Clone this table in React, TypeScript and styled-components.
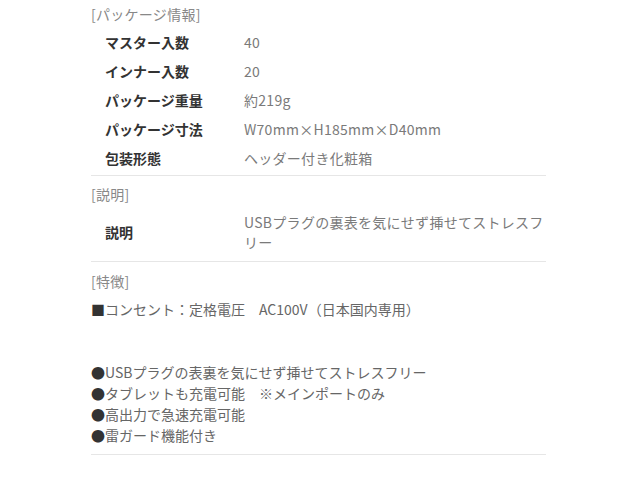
import React from 'react';
import styled, { createGlobalStyle } from 'styled-components';

const GlobalStyle = createGlobalStyle`
  html, body {
    margin: 0;
    padding: 0;
    background: #fff;
  }
  body {
    font-family: 'Noto Sans CJK JP', 'Noto Sans', sans-serif;
    font-size: 14px;
    color: #666;
  }
`;

const Wrapper = styled.div`
  width: 455px;
  margin-left: 91px;
`;

const Section = styled.section<{ $padBottom: number }>`
  padding-bottom: ${(p) => p.$padBottom}px;
  border-bottom: 1px solid #e6e6e6;
`;

const SectionTitle = styled.div<{ $padTop: number }>`
  padding: ${(p) => p.$padTop}px 0 3px;
  line-height: 20px;
  color: #888;
  letter-spacing: 0.02em;
`;

const Row = styled.div<{ $tall?: boolean }>`
  display: grid;
  grid-template-columns: 153px 1fr;
  align-items: center;
  min-height: 29px;
  padding: ${(p) => (p.$tall ? '5px 0 9px' : '0')};
`;

const Label = styled.div`
  padding-left: 14px;
  font-weight: bold;
  color: #333;
  line-height: 20px;
`;

const Value = styled.div`
  color: #7a7a7a;
  line-height: 20px;
  letter-spacing: 0.02em;
`;

const Features = styled.div`
  line-height: 21px;
  color: #666;
  padding-top: 5px;
`;

const Line = styled.div`
  min-height: 21px;
`;

const Mark = styled.span`
  color: #333;
`;

const packageRows: [string, string][] = [
  ['マスター入数', '40'],
  ['インナー入数', '20'],
  ['パッケージ重量', '約219g'],
  ['パッケージ寸法', 'W70mm×H185mm×D40mm'],
  ['包装形態', 'ヘッダー付き化粧箱'],
];

const bullets = [
  'USBプラグの表裏を気にせず挿せてストレスフリー',
  'タブレットも充電可能　※メインポートのみ',
  '高出力で急速充電可能',
  '雷ガード機能付き',
];

export default function App() {
  return (
    <>
      <GlobalStyle />
      <Wrapper>
        <Section $padBottom={3}>
          <SectionTitle $padTop={4}>[パッケージ情報]</SectionTitle>
          {packageRows.map(([label, value]) => (
            <Row key={label}>
              <Label>{label}</Label>
              <Value>{value}</Value>
            </Row>
          ))}
        </Section>
        <Section $padBottom={0}>
          <SectionTitle $padTop={8}>[説明]</SectionTitle>
          <Row $tall>
            <Label>説明</Label>
            <Value>USBプラグの裏表を気にせず挿せてストレスフリー</Value>
          </Row>
        </Section>
        <Section $padBottom={8}>
          <SectionTitle $padTop={9}>[特徴]</SectionTitle>
          <Features>
            <Line>
              <Mark>■</Mark>コンセント：定格電圧　AC100V（日本国内専用）
            </Line>
            <Line />
            <Line />
            {bullets.map((b) => (
              <Line key={b}>
                <Mark>●</Mark>
                {b}
              </Line>
            ))}
          </Features>
        </Section>
      </Wrapper>
    </>
  );
}
